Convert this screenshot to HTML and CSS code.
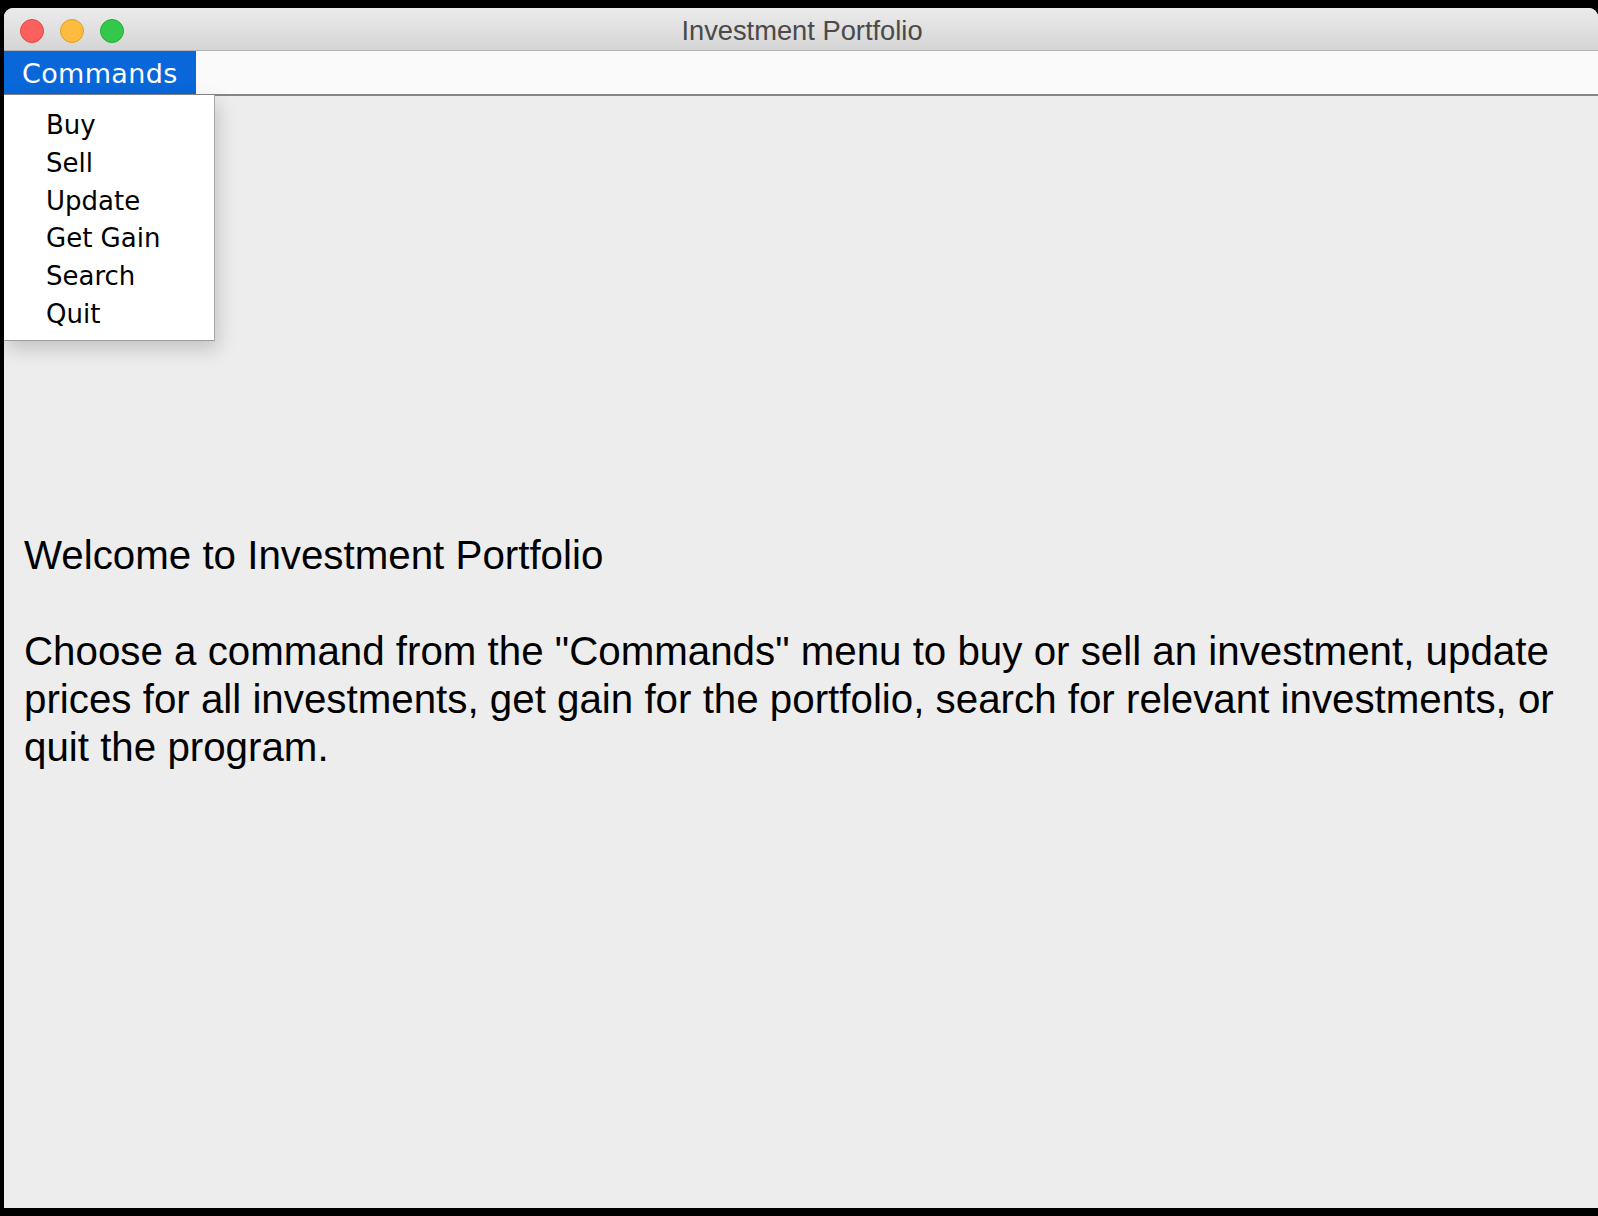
FILE: index.html
```html
<!DOCTYPE html>
<html>
<head>
<meta charset="utf-8">
<title>Investment Portfolio</title>
<link rel="stylesheet" href="styles.css">
</head>
<body>
<div class="window">
  <div class="titlebar">
    <div class="lights">
      <span class="light red"></span>
      <span class="light yellow"></span>
      <span class="light green"></span>
    </div>
    <div class="title">Investment Portfolio</div>
  </div>
  <div class="menubar">
    <div class="menu-item active">Commands</div>
  </div>
  <div class="content">
    <div class="popup">
      <div class="popup-item">Buy</div>
      <div class="popup-item">Sell</div>
      <div class="popup-item">Update</div>
      <div class="popup-item">Get Gain</div>
      <div class="popup-item">Search</div>
      <div class="popup-item">Quit</div>
    </div>
    <div class="message">
      <p class="line">Welcome to Investment Portfolio</p>
      <p class="line blank">&nbsp;</p>
      <p class="line">Choose a command from the "Commands" menu to buy or sell an investment, update prices for all investments, get gain for the portfolio, search for relevant investments, or quit the program.</p>
    </div>
  </div>
</div>
</body>
</html>
```

FILE: styles.css
```css
html, body {
  margin: 0;
  padding: 0;
  background: #000;
  height: 100%;
}

body {
  overflow: hidden;
}

.window {
  margin: 8px 0 0 4px;
  width: 1594px;
  height: 1200px;
  border-radius: 9px 9px 0 0;
  overflow: hidden;
  display: flex;
  flex-direction: column;
  background: #ededed;
}

.titlebar {
  height: 42px;
  flex: 0 0 42px;
  border-bottom: 1px solid #b3b3b3;
  background: linear-gradient(to bottom, #ebebeb 0%, #d5d5d5 100%);
  display: flex;
  align-items: center;
  position: relative;
}

.lights {
  display: flex;
  gap: 16px;
  padding-left: 16px;
  padding-top: 3px;
  align-items: center;
  position: relative;
  z-index: 1;
}

.light {
  width: 22px;
  height: 22px;
  border-radius: 50%;
  display: block;
}

.red {
  background: #fc605c;
  border: 1px solid #de4a43;
}

.yellow {
  background: #fdbc40;
  border: 1px solid #dea123;
}

.green {
  background: #34c84a;
  border: 1px solid #27aa35;
}

.title {
  position: absolute;
  left: 0;
  right: 0;
  top: 0;
  bottom: 0;
  display: flex;
  align-items: center;
  justify-content: center;
  font-family: "Liberation Sans", Arial, sans-serif;
  font-size: 27.3px;
  color: #4a4a4a;
  padding-left: 2px;
  padding-top: 3px;
}

.menubar {
  height: 43px;
  flex: 0 0 43px;
  background: #fafafa;
  border-bottom: 2px solid #868686;
  display: flex;
}

.menu-item {
  display: flex;
  align-items: center;
  padding: 2px 0 0 18px;
  box-sizing: border-box;
  width: 192px;
  font-family: "DejaVu Sans", Verdana, sans-serif;
  font-size: 27px;
  letter-spacing: 0.35px;
  color: #000;
}

.menu-item.active {
  background: #0a67d9;
  color: #fff;
}

.content {
  flex: 1;
  position: relative;
  display: flex;
  align-items: center;
  padding: 0 20px;
  background: #ededed;
}

.popup {
  position: absolute;
  left: 0;
  top: -1px;
  width: 211px;
  box-sizing: border-box;
  padding: 12px 0 6px 0;
  background: #fff;
  border-right: 1px solid #a9a9a9;
  border-bottom: 1px solid #9c9c9c;
  box-shadow: 3px 8px 18px rgba(0, 0, 0, 0.18);
  z-index: 2;
}

.popup-item {
  font-family: "DejaVu Sans", Verdana, sans-serif;
  font-size: 26px;
  line-height: 37.8px;
  padding-left: 42px;
  color: #000;
}

.message {
  font-family: "Liberation Sans", Arial, sans-serif;
  font-size: 40.3px;
  line-height: 48px;
  color: #000;
}

.line {
  margin: 0;
}
```
